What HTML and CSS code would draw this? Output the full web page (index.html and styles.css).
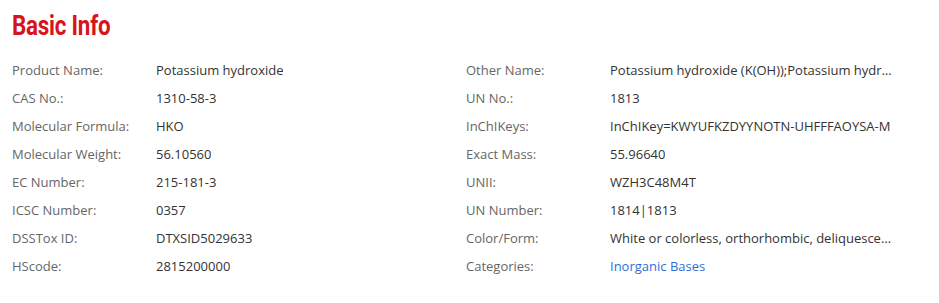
FILE: index.html
```html
<!DOCTYPE html>
<html lang="en">
<head>
  <meta charset="UTF-8" />
  <meta name="viewport" content="width=device-width, initial-scale=1.0" />
  <title>Potassium hydroxide - Basic Info</title>
  <link rel="stylesheet" href="styles.css">
</head>
<body>
  <section class="basic-info">
    <h2><span>Basic Info</span></h2>

    <div class="info-grid">
      <div class="info-row">
        <span class="label">Product Name:</span>
        <span class="value">Potassium hydroxide</span>
      </div>
      <div class="info-row">
        <span class="label">Other Name:</span>
        <span class="value">Potassium hydroxide (K(OH));Potassium hydrate;Caustic potash;Lye</span>
      </div>

      <div class="info-row">
        <span class="label">CAS No.:</span>
        <span class="value">1310-58-3</span>
      </div>
      <div class="info-row">
        <span class="label">UN No.:</span>
        <span class="value">1813</span>
      </div>

      <div class="info-row">
        <span class="label">Molecular Formula:</span>
        <span class="value">HKO</span>
      </div>
      <div class="info-row">
        <span class="label">InChIKeys:</span>
        <span class="value">InChIKey=KWYUFKZDYYNOTN-UHFFFAOYSA-M</span>
      </div>

      <div class="info-row">
        <span class="label">Molecular Weight:</span>
        <span class="value">56.10560</span>
      </div>
      <div class="info-row">
        <span class="label">Exact Mass:</span>
        <span class="value">55.96640</span>
      </div>

      <div class="info-row">
        <span class="label">EC Number:</span>
        <span class="value">215-181-3</span>
      </div>
      <div class="info-row">
        <span class="label">UNII:</span>
        <span class="value">WZH3C48M4T</span>
      </div>

      <div class="info-row">
        <span class="label">ICSC Number:</span>
        <span class="value">0357</span>
      </div>
      <div class="info-row">
        <span class="label">UN Number:</span>
        <span class="value">1814|1813</span>
      </div>

      <div class="info-row">
        <span class="label">DSSTox ID:</span>
        <span class="value">DTXSID5029633</span>
      </div>
      <div class="info-row">
        <span class="label">Color/Form:</span>
        <span class="value">White or colorless, orthorhombic, deliquescent lumps, rods, flakes, sticks, pellets</span>
      </div>

      <div class="info-row">
        <span class="label">HScode:</span>
        <span class="value">2815200000</span>
      </div>
      <div class="info-row">
        <span class="label">Categories:</span>
        <span class="value"><a href="#">Inorganic Bases</a></span>
      </div>
    </div>
  </section>
</body>
</html>
```

FILE: styles.css
```css
body {
  font-family: 'Open Sans', 'Noto Sans', sans-serif;
  background-color: #fff;
  color: #333;
  margin: 0;
  padding: 0 12px;
}

.basic-info h2 {
  font-family: 'Roboto', 'Liberation Sans', sans-serif;
  font-size: 28px;
  font-weight: bold;
  color: #d7141c;
  margin: 0;
  padding-top: 10px;
  line-height: 32px;
  letter-spacing: -0.3px;
}

/* no condensed face installed, so squeeze the regular bold */
.basic-info h2 span {
  display: inline-block;
  transform: scaleX(0.8);
  transform-origin: left center;
}

.info-grid {
  display: grid;
  grid-template-columns: 454px 431px;
  margin-top: 14px;
}

.info-row {
  display: flex;
  height: 28px;
  align-items: center;
  font-size: 13px;
  min-width: 0;
}

.label {
  width: 144px;
  flex-shrink: 0;
  color: #666;
}

.value {
  min-width: 0;
  white-space: nowrap;
  overflow: hidden;
  text-overflow: ellipsis;
}

.value a {
  color: #2f6fd8;
  text-decoration: none;
}
```
